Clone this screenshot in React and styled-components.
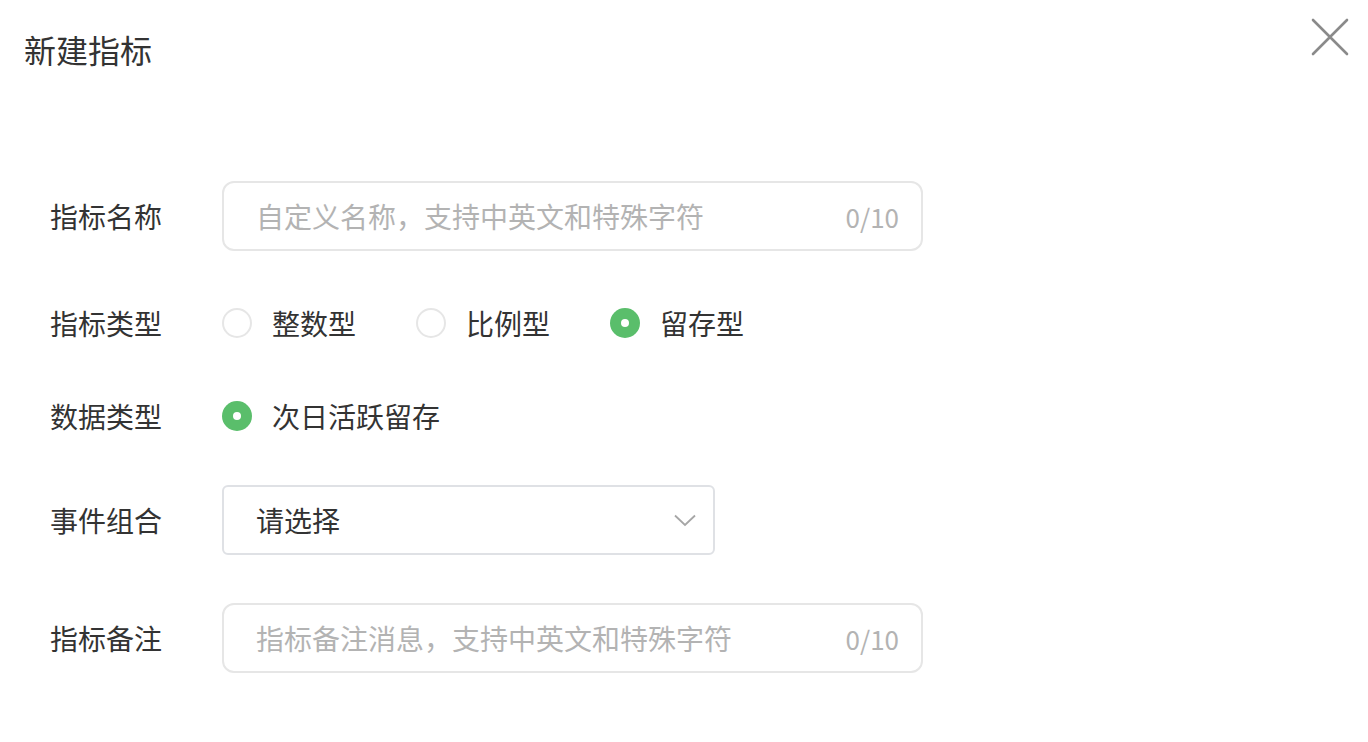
import React, { useState } from 'react'
import styled, { createGlobalStyle } from 'styled-components'

const GlobalStyle = createGlobalStyle`
    html, body {
        margin: 0;
        padding: 0;
        background: #ffffff;
        font-family: "Noto Sans CJK SC", "Noto Sans", sans-serif;
    }
`

const Dialog = styled.div`
    position: relative;
    width: 1368px;
    height: 742px;
    box-sizing: border-box;
    padding: 0 24px;
    background: #ffffff;
`

const Header = styled.div`
    display: flex;
    align-items: center;
    justify-content: space-between;
    height: 100px;
`

const Title = styled.h1`
    margin: 0;
    margin-top: -2px;
    font-size: 32px;
    font-weight: 400;
    color: #333333;
`

const CloseButton = styled.button`
    position: absolute;
    top: 17px;
    right: 18px;
    width: 40px;
    height: 40px;
    padding: 0;
    border: none;
    background: transparent;
    cursor: pointer;
    display: flex;
    align-items: center;
    justify-content: center;
`

const Form = styled.div`
    display: flex;
    flex-direction: column;
    padding-left: 26px;
    padding-top: 81px;
`

const Row = styled.div`
    display: flex;
    align-items: center;
    height: ${(p) => p.$h}px;
    margin-top: ${(p) => p.$mt || 0}px;
`

const Label = styled.div`
    width: 172px;
    flex-shrink: 0;
    font-size: 28px;
    color: #333333;
`

const InputBox = styled.div`
    display: flex;
    align-items: center;
    width: 701px;
    height: 70px;
    box-sizing: border-box;
    padding: 0 22px 0 32px;
    border: 2px solid #e6e6e6;
    border-radius: 12px;
`

const TextInput = styled.input`
    flex: 1;
    min-width: 0;
    border: none;
    outline: none;
    padding: 0;
    font-family: inherit;
    font-size: 28px;
    color: #333333;
    background: transparent;

    &::placeholder {
        color: #b3b3b3;
    }
`

const Counter = styled.span`
    font-size: 26px;
    color: #b3b3b3;
`

const RadioGroup = styled.div`
    display: flex;
    align-items: center;
    gap: 60px;
`

const RadioItem = styled.label`
    display: flex;
    align-items: center;
    gap: 20px;
    font-size: 28px;
    color: #333333;
    cursor: pointer;
`

const RadioDot = styled.span`
    width: 30px;
    height: 30px;
    box-sizing: border-box;
    border-radius: 50%;
    display: flex;
    align-items: center;
    justify-content: center;
    border: ${(p) => (p.$checked ? 'none' : '2px solid #e6e6e6')};
    background: ${(p) => (p.$checked ? '#5abe6b' : '#ffffff')};

    &::after {
        content: '';
        display: ${(p) => (p.$checked ? 'block' : 'none')};
        width: 8px;
        height: 8px;
        border-radius: 50%;
        background: #ffffff;
    }
`

const Select = styled.div`
    display: flex;
    align-items: center;
    justify-content: space-between;
    width: 493px;
    height: 70px;
    box-sizing: border-box;
    padding: 0 17px 0 32px;
    border: 2px solid #dfe1e5;
    border-radius: 6px;
    font-size: 28px;
    color: #333333;
    cursor: pointer;
`

const Radio = ({ checked, children, onClick }) => (
    <RadioItem onClick={onClick}>
        <RadioDot $checked={checked} />
        {children}
    </RadioItem>
)

const App = () => {
    const [type, setType] = useState('retain')
    const [name, setName] = useState('')
    const [remark, setRemark] = useState('')

    return (
        <>
            <GlobalStyle />
            <Dialog>
                <Header>
                    <Title>新建指标</Title>
                </Header>
                <CloseButton aria-label="关闭">
                    <svg width="38" height="38" viewBox="0 0 38 38">
                        <path d="M2 2L36 36M36 2L2 36" stroke="#8a8a8a" strokeWidth="2.6" strokeLinecap="round" />
                    </svg>
                </CloseButton>
                <Form>
                    <Row $h={70}>
                        <Label>指标名称</Label>
                        <InputBox>
                            <TextInput
                                placeholder="自定义名称，支持中英文和特殊字符"
                                maxLength={10}
                                value={name}
                                onChange={(e) => setName(e.target.value)}
                            />
                            <Counter>{name.length}/10</Counter>
                        </InputBox>
                    </Row>
                    <Row $h={40} $mt={52}>
                        <Label>指标类型</Label>
                        <RadioGroup>
                            <Radio checked={type === 'int'} onClick={() => setType('int')}>整数型</Radio>
                            <Radio checked={type === 'ratio'} onClick={() => setType('ratio')}>比例型</Radio>
                            <Radio checked={type === 'retain'} onClick={() => setType('retain')}>留存型</Radio>
                        </RadioGroup>
                    </Row>
                    <Row $h={40} $mt={53}>
                        <Label>数据类型</Label>
                        <Radio checked>次日活跃留存</Radio>
                    </Row>
                    <Row $h={70} $mt={49}>
                        <Label>事件组合</Label>
                        <Select>
                            <span>请选择</span>
                            <svg width="22" height="13" viewBox="0 0 22 13">
                                <path d="M1 1.5L11 11L21 1.5" fill="none" stroke="#a6a6a6" strokeWidth="1.8" />
                            </svg>
                        </Select>
                    </Row>
                    <Row $h={70} $mt={48}>
                        <Label>指标备注</Label>
                        <InputBox>
                            <TextInput
                                placeholder="指标备注消息，支持中英文和特殊字符"
                                maxLength={10}
                                value={remark}
                                onChange={(e) => setRemark(e.target.value)}
                            />
                            <Counter>{remark.length}/10</Counter>
                        </InputBox>
                    </Row>
                </Form>
            </Dialog>
        </>
    )
}

export default App
